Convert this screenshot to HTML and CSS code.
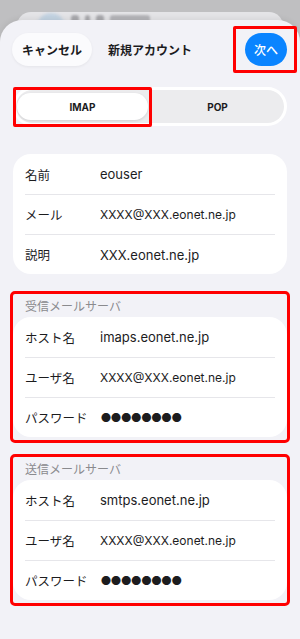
FILE: index.html
```html
<!DOCTYPE html>
<html lang="ja">
<head>
<meta charset="utf-8">
<title>新規アカウント</title>
<link rel="stylesheet" href="styles.css">
</head>
<body>
<div class="backdrop">
  <div class="back-card">
    <span class="back-avatar"></span>
    <span class="back-bar"></span>
    <span class="back-bar short"></span>
    <span class="back-bar"></span>
    <span class="back-bar wide"></span>
  </div>
</div>
<main class="sheet">
  <header class="nav">
    <button class="btn-cancel">キャンセル</button>
    <h1 class="title">新規アカウント</h1>
    <button class="btn-next">次へ</button>
  </header>

  <div class="segmented">
    <div class="seg-inner">
      <div class="seg-item is-active">IMAP</div>
      <div class="seg-item">POP</div>
    </div>
  </div>

  <section class="card">
    <div class="row"><span class="label">名前</span><span class="value">eouser</span></div>
    <div class="row"><span class="label">メール</span><span class="value small">XXXX@XXX.eonet.ne.jp</span></div>
    <div class="row"><span class="label">説明</span><span class="value">XXX.eonet.ne.jp</span></div>
  </section>

  <section class="group marked">
    <h2 class="group-title">受信メールサーバ</h2>
    <div class="card">
      <div class="row"><span class="label">ホスト名</span><span class="value">imaps.eonet.ne.jp</span></div>
      <div class="row"><span class="label">ユーザ名</span><span class="value small">XXXX@XXX.eonet.ne.jp</span></div>
      <div class="row"><span class="label">パスワード</span><span class="value dots">●●●●●●●●</span></div>
    </div>
  </section>

  <section class="group marked second">
    <h2 class="group-title">送信メールサーバ</h2>
    <div class="card">
      <div class="row"><span class="label">ホスト名</span><span class="value">smtps.eonet.ne.jp</span></div>
      <div class="row"><span class="label">ユーザ名</span><span class="value small">XXXX@XXX.eonet.ne.jp</span></div>
      <div class="row"><span class="label">パスワード</span><span class="value dots">●●●●●●●●</span></div>
    </div>
  </section>
</main>
</body>
</html>
```
FILE: styles.css
```css
* { box-sizing: border-box; }

html, body {
  margin: 0;
  padding: 0;
}

body {
  width: 300px;
  min-height: 639px;
  background: #bfbfc1;
  font-family: "Inter", "Noto Sans CJK JP", sans-serif;
  color: #1c1c1e;
  overflow: hidden;
}

.backdrop {
  height: 40px;
  margin-bottom: -20px;
  padding: 12px 17px 0;
}

.back-card {
  height: 28px;
  background: #e4e4e7;
  border-radius: 14px 14px 0 0;
  display: flex;
  align-items: flex-start;
  gap: 6px;
  padding: 1px 0 0 20px;
  overflow: hidden;
}

.back-avatar {
  width: 28px;
  height: 28px;
  border-radius: 50%;
  background: #c3d3e2;
  filter: blur(1.5px);
}

.back-bar {
  width: 8px;
  height: 12px;
  margin-top: 2px;
  background: #a9a9ad;
  border-radius: 3px;
  filter: blur(1.3px);
}

.back-bar.short { width: 5px; }
.back-bar.wide { width: 40px; background: #b4b4b8; }

.sheet {
  position: relative;
  background: #f2f2f7;
  border-radius: 22px 22px 0 0;
  min-height: 619px;
  padding: 13px 13px 20px;
  box-shadow: 0 -1px 6px rgba(0, 0, 0, 0.08);
}

/* nav */
.nav {
  display: flex;
  align-items: center;
  height: 33px;
}

.btn-cancel {
  height: 33px;
  margin-left: -1px;
  padding: 0 10px;
  border: 0;
  border-radius: 17px;
  background: #fbfbfd;
  box-shadow: 0 1px 3px rgba(0, 0, 0, 0.06);
  font-family: inherit;
  font-size: 12px;
  font-weight: 600;
  color: #1c1c1e;
}

.title {
  margin: 0 0 0 16px;
  font-size: 12px;
  font-weight: 600;
  flex: 1;
}

.btn-next {
  position: relative;
  width: 42px;
  height: 33px;
  border: 0;
  border-radius: 17px;
  background: #0a84ff;
  color: #fff;
  font-family: inherit;
  font-size: 12px;
  font-weight: 500;
  padding: 0;
}

.btn-next::after {
  content: "";
  position: absolute;
  top: -7px;
  right: -10px;
  bottom: -7px;
  left: -12px;
  border: 3px solid #f00;
  border-radius: 2px;
}

/* segmented */
.segmented {
  margin-top: 21px;
  background: #fff;
  border-radius: 20px;
  padding: 3px;
}

.seg-inner {
  display: grid;
  grid-template-columns: 1fr 1fr;
  gap: 4px;
  background: #ececee;
  border-radius: 17px;
  padding: 3px 1px;
}

.seg-item {
  height: 27px;
  display: flex;
  align-items: center;
  justify-content: center;
  font-size: 10px;
  font-weight: 700;
  color: #1c1c1e;
  border-radius: 14px;
}

.seg-item.is-active {
  position: relative;
  background: #fff;
  box-shadow: 0 1px 3px rgba(0, 0, 0, 0.12);
}

.seg-item.is-active::after {
  content: "";
  position: absolute;
  top: -6px;
  right: -4px;
  bottom: -7px;
  left: -4px;
  border: 3px solid #f00;
  border-radius: 2px;
}

/* cards */
.card {
  background: #fff;
  border-radius: 18px;
  padding: 0 12px;
}

.sheet > .card {
  margin-top: 28px;
}

.row {
  height: 40px;
  display: grid;
  grid-template-columns: 75px 1fr;
  align-items: center;
}

.row + .row {
  border-top: 1px solid #e6e6ea;
}

.label {
  font-size: 12.5px;
  color: #1c1c1e;
}

.value {
  font-size: 13px;
  color: #1c1c1e;
}

.value.small {
  font-size: 12px;
}

.value.dots {
  font-family: "Noto Sans CJK JP", sans-serif;
  font-size: 10px;
  letter-spacing: 0.1px;
  padding-left: 1px;
}

/* groups */
.group {
  margin-top: 20px;
  padding: 3px 0 3px;
}

.group.second {
  margin-top: 17px;
}

.marked {
  outline: 3px solid #f00;
  border-radius: 2px;
}

.group-title {
  margin: 2px 0 2px 12px;
  height: 16px;
  line-height: 16px;
  font-size: 12px;
  font-weight: 400;
  color: #8a8a8e;
}
```
